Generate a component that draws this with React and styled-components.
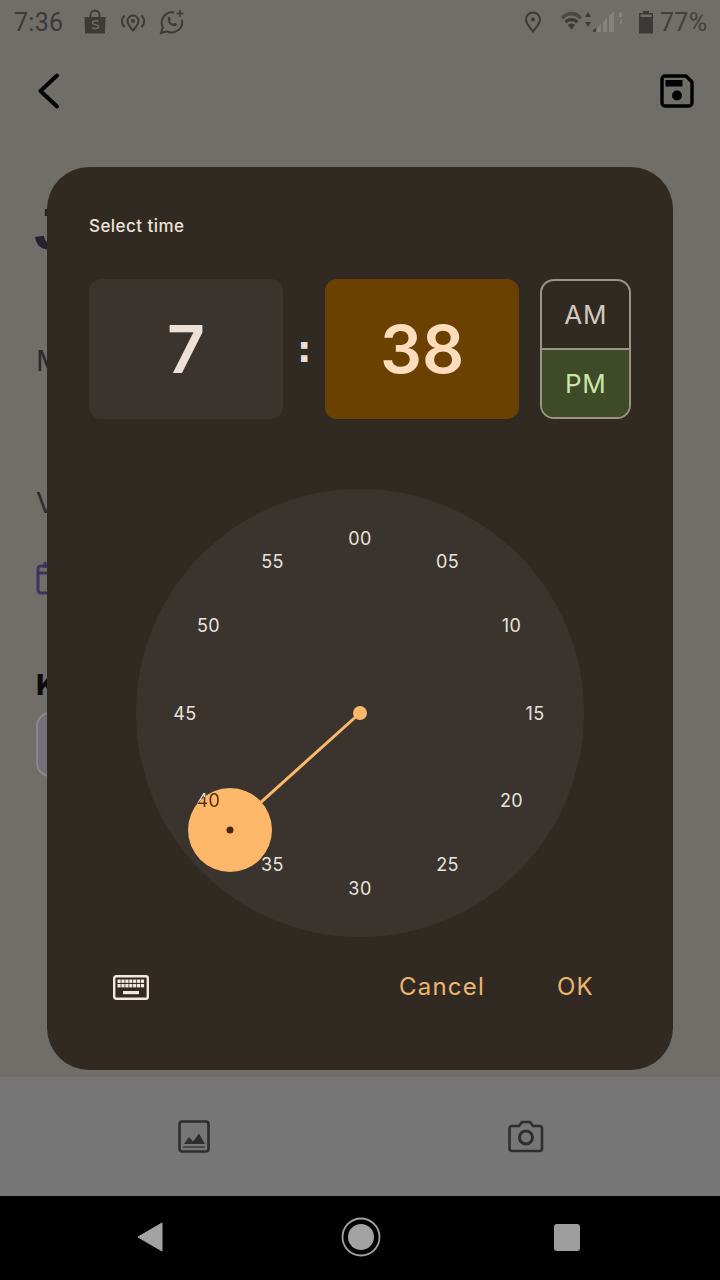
import React from "react";
import styled, { createGlobalStyle } from "styled-components";

const Global = createGlobalStyle`
  html, body { margin: 0; padding: 0; background: #000; }
  * { box-sizing: border-box; }
`;

const Page = styled.div`
  position: relative;
  width: 720px;
  height: 1280px;
  overflow: hidden;
  display: flex;
  flex-direction: column;
  background: #6f6e69;
  font-family: Inter, "Liberation Sans", sans-serif;
`;

const StatusBar = styled.div`
  height: 44px;
  padding: 0 14px;
  display: flex;
  align-items: center;
  justify-content: space-between;
  color: #3b3a37;
  font-family: Roboto, "Liberation Sans", sans-serif;
  font-size: 25px;
  letter-spacing: 0.3px;
`;

const StatusGroup = styled.div`
  display: flex;
  align-items: center;
  gap: ${(p) => p.$gap || 0}px;
`;

const Time = styled.span`
  width: 56px;
`;

const Spacer = styled.span`
  width: ${(p) => p.$w}px;
`;

const Percent = styled.span`
  margin-left: 6px;
  width: 46px;
  color: #41403d;
`;

const AppBar = styled.div`
  height: 94px;
  padding: 0 26px 0 38px;
  display: flex;
  align-items: center;
  justify-content: space-between;
`;

const Content = styled.div`
  flex: 1;
  padding: 60px 0 0 36px;
  display: flex;
  flex-direction: column;
  align-items: flex-start;
`;

const Title = styled.div`
  font-family: "Liberation Mono", monospace;
  font-size: 62px;
  line-height: 70px;
  margin-left: -4px;
  color: #23222c;
  font-weight: 700;
`;

const FieldLabel = styled.div`
  font-size: 29px;
  line-height: 36px;
  color: ${(p) => (p.$bold ? "#0a0a0a" : "#2b2b2e")};
  font-weight: ${(p) => (p.$bold ? 800 : 400)};
  margin-top: ${(p) => p.$top}px;
`;

const CalendarIcon = styled.svg`
  margin-top: 40px;
  display: block;
`;

const InputBox = styled.div`
  margin-top: 9px;
  width: 100px;
  height: 65px;
  border: 2px solid #8a888c;
  border-radius: 14px;
  background: #747279;
`;

const BottomBar = styled.div`
  height: 119px;
  background: #767676;
  display: flex;
  align-items: center;
  padding: 0 176px 0 178px;
  justify-content: space-between;
`;

const NavBar = styled.div`
  height: 84px;
  background: #000;
  display: flex;
  align-items: center;
  justify-content: space-between;
  padding: 0 140px 2px 137px;
`;

const Scrim = styled.div`
  position: absolute;
  inset: 0;
  display: flex;
  justify-content: center;
  padding-top: 167px;
`;

const Dialog = styled.div`
  width: 626px;
  height: 903px;
  border-radius: 42px;
  background: #312a23;
  padding: 48px 42px 0;
  display: flex;
  flex-direction: column;
`;

const Heading = styled.div`
  font-size: 17px;
  line-height: 22px;
  letter-spacing: 0.45px;
  color: #ede1d8;
  font-weight: 500;
`;

const TimeRow = styled.div`
  margin-top: 42px;
  height: 140px;
  display: flex;
  align-items: stretch;
`;

const TimeBox = styled.div`
  width: 195px;
  border-radius: 12px;
  display: flex;
  align-items: center;
  justify-content: center;
  font-size: 66px;
  font-weight: 600;
  background: ${(p) => (p.$active ? "#6a4100" : "#3b332d")};
  color: ${(p) => (p.$active ? "#ffdcbb" : "#ece0d8")};
`;

const Colon = styled.div`
  width: 42px;
  display: flex;
  align-items: center;
  justify-content: center;
  font-family: "DejaVu Sans", sans-serif;
  font-size: 36px;
  font-weight: 700;
  color: #ece0d8;
`;

const Period = styled.div`
  margin-left: 21px;
  width: 91px;
  border: 2px solid #9a9388;
  border-radius: 14px;
  overflow: hidden;
  display: flex;
  flex-direction: column;
`;

const PeriodOption = styled.div`
  flex: 1;
  display: flex;
  align-items: center;
  justify-content: center;
  font-size: 26px;
  letter-spacing: 0.6px;
  font-weight: 400;
  background: ${(p) => (p.$on ? "#3f4a29" : "transparent")};
  color: ${(p) => (p.$on ? "#c8e6a6" : "#d3c8bd")};
  border-top: ${(p) => (p.$on ? "2px solid #9a9388" : "none")};
`;

const Dial = styled.div`
  position: relative;
  margin: 70px auto 0;
  width: 448px;
  height: 448px;
  flex: none;
  border-radius: 50%;
  background: #3b332d;
`;

const Hand = styled.svg`
  position: absolute;
  inset: 0;
`;

const Tick = styled.span`
  position: absolute;
  width: 44px;
  height: 24px;
  margin: -12px 0 0 -22px;
  display: flex;
  align-items: center;
  justify-content: center;
  font-size: 18px;
  letter-spacing: 0.4px;
  color: #e9e2dc;
`;

const SelectedTick = styled(Tick)`
  color: transparent;
  background: radial-gradient(circle 42px at 44px 41px, #553000 99%, #e9e2dc 100%);
  background-clip: text;
  -webkit-background-clip: text;
`;

const Actions = styled.div`
  margin-top: 32px;
  display: flex;
  align-items: center;
  padding: 0 37px 0 24px;
`;

const ActionButton = styled.div`
  font-size: 24px;
  line-height: 36px;
  letter-spacing: 1.2px;
  color: #ecb571;
  margin-left: ${(p) => p.$left}px;
`;

const MINUTES = ["00", "05", "10", "15", "20", "25", "30", "35", "40", "45", "50", "55"];
const ICON = "#3b3a37";

function Ticks() {
  return MINUTES.map((m, i) => {
    const a = (i * 30 * Math.PI) / 180;
    const left = 224 + 175 * Math.sin(a);
    const top = 224 - 175 * Math.cos(a);
    const Comp = m === "40" ? SelectedTick : Tick;
    return (
      <Comp key={m} style={{ left, top }}>
        {m}
      </Comp>
    );
  });
}

const ShopIcon = () => (
  <svg width="24" height="26" viewBox="0 0 24 26">
    <path d="M1.500 8h21l-.6 16.500H2.100z" fill={ICON} />
    <path d="M7.500 9V6a4.500 4.500 0 0 1 9 0v3" fill="none" stroke={ICON} strokeWidth="1.800" />
    <path d="M15.500 12.500c-1-1-6-1.200-6 1.200 0 2.600 6.200 1.300 6.200 4.100 0 2.200-4.700 2.200-6.500.8" fill="none" stroke="#6f6e69" strokeWidth="1.400" />
  </svg>
);

const NearbyIcon = () => (
  <svg width="26" height="24" viewBox="0 0 26 24" fill="none" stroke={ICON} strokeWidth="2">
    <path d="M13 20.500c-3.400-3.800-5.500-6.300-5.500-9.500a5.500 5.500 0 0 1 11 0c0 3.200-2.100 5.700-5.500 9.500z" />
    <circle cx="13" cy="11" r="2" fill={ICON} stroke="none" />
    <path d="M4.500 5.500c-3.500 3.500-3.500 8 0 11.500M21.500 5.500c3.500 3.500 3.500 8 0 11.500" />
  </svg>
);

const WhatsIcon = () => (
  <svg width="26" height="26" viewBox="0 0 26 26" fill="none" stroke={ICON} strokeWidth="2">
    <path d="M15 3.500A10.500 10.500 0 0 0 3.800 18.500L2 24l6-1.700A10.500 10.500 0 0 0 23 11" />
    <path d="M8.500 9c.5-1.500 2-1.500 2.500-.5l.8 1.800-1 1.400c.8 1.500 2 2.600 3.500 3.300l1.400-1.200 2 1c.6 1-.5 2.500-2 2.500-3.800 0-7.900-4-6.700-8.300z" fill={ICON} stroke="none" />
    <path d="M21 1v7M17.500 4.500h7" strokeWidth="1.600" />
  </svg>
);

const PinIcon = () => (
  <svg width="18" height="22" viewBox="0 0 18 22" fill="none" stroke={ICON} strokeWidth="2">
    <path d="M9 20.500C5 15.500 2 12.500 2 8.500a7 7 0 0 1 14 0c0 4-3 7-7 12z" />
    <circle cx="9" cy="8.500" r="2" fill={ICON} stroke="none" />
  </svg>
);

const WifiIcon = () => (
  <svg width="32" height="22" viewBox="0 0 32 22">
    <path d="M0 6C6-1 16-1 21 6l-2 2.500C13 3 7 3 2 8.500z" fill="#4a4946" />
    <path d="M3.500 10C7 6 14 6 17.500 10l-2 2.200c-2.500-2.700-7.500-2.700-10 0z" fill={ICON} />
    <path d="M7 14c2-2 5-2 7 0l-3.500 4.500z" fill={ICON} />
    <path d="M27 1l3 5h-6zM27 16l-3-5h6z" fill={ICON} />
  </svg>
);

const SignalIcon = () => (
  <svg width="34" height="24" viewBox="0 0 34 24" fill="#82817c">
    <path d="M0 22l3-3v3zM4 18l4-4v8H4zM10 12l4-4v14h-4zM16 6l5-5v21h-5z" />
    <path d="M26 3l3-1v5h-3zM27 11l2-3v5l-2 1z" fill="#85847f" />
    <path d="M0 20l3-2v4H0z" fill="#3f3e3b" />
  </svg>
);

const BatteryIcon = () => (
  <svg width="16" height="24" viewBox="0 0 16 24">
    <path d="M5 1h6v2h4v20.500H1V3h4z" fill={ICON} />
    <rect x="2.500" y="4.500" width="11" height="2.500" fill="#6f6e69" />
  </svg>
);

const BackIcon = () => (
  <svg width="22" height="36" viewBox="0 0 22 36" fill="none" stroke="#000" strokeWidth="4" strokeLinecap="round" strokeLinejoin="round">
    <path d="M19 2.500L2.500 18 19 33.500" />
  </svg>
);

const SaveIcon = () => (
  <svg width="34" height="34" viewBox="0 0 34 34">
    <path d="M5 2h21l6 6v21a3 3 0 0 1-3 3H5a3 3 0 0 1-3-3V5a3 3 0 0 1 3-3z" fill="none" stroke="#000" strokeWidth="3.400" strokeLinejoin="round" />
    <rect x="5.500" y="6" width="17" height="6.500" fill="#000" />
    <circle cx="17" cy="21.500" r="5" fill="#000" />
  </svg>
);

const ImageIcon = () => (
  <svg width="32" height="33" viewBox="0 0 32 33" fill="none">
    <rect x="1.500" y="1.500" width="29" height="30" rx="2.500" stroke="#2e2e2e" strokeWidth="2.600" />
    <path d="M6 24l5-7 4 4.500 6-8 6 10.500z" fill="#2e2e2e" />
    <path d="M5 27h22" stroke="#2e2e2e" strokeWidth="1.200" />
  </svg>
);

const CameraIcon = () => (
  <svg width="36" height="33" viewBox="0 0 36 33" fill="none" stroke="#2e2e2e" strokeWidth="2.600" strokeLinejoin="round">
    <path d="M4 6h7l3-4h8l3 4h7a2.500 2.500 0 0 1 2 2.500v20a2.500 2.500 0 0 1-2 2.500H4a2.500 2.500 0 0 1-2.500-2.500v-20A2.500 2.500 0 0 1 4 6z" />
    <circle cx="18" cy="17.500" r="6.500" strokeWidth="3" />
  </svg>
);

const KeyboardIcon = () => {
  const keys = [];
  for (let r = 0; r < 2; r++) {
    for (let c = 0; c < 7; c++) {
      keys.push(<rect key={`${r}-${c}`} x={4.500 + c * 3.900} y={4.500 + r * 4.500} width="3.200" height="3.400" />);
    }
  }
  return (
    <svg width="36" height="25" viewBox="0 0 36 25" fill="#f3e8de">
      <rect x="1.200" y="1.200" width="33.600" height="22.600" rx="2" fill="none" stroke="#f3e8de" strokeWidth="2.400" />
      {keys}
      <rect x="10" y="16" width="16" height="3.200" />
    </svg>
  );
};

const NavBack = () => (
  <svg width="30" height="30" viewBox="0 0 30 30">
    <path d="M25 1v28L1 15z" fill="#a3a3a3" stroke="#a3a3a3" strokeLinejoin="round" />
  </svg>
);

const NavHome = () => (
  <svg width="40" height="40" viewBox="0 0 40 40">
    <circle cx="20" cy="20" r="18.500" fill="none" stroke="#a3a3a3" strokeWidth="1.800" />
    <circle cx="20" cy="20" r="13" fill="#a3a3a3" />
  </svg>
);

const NavSquare = () => (
  <svg width="26" height="27" viewBox="0 0 26 27">
    <rect width="26" height="27" rx="3" fill="#9d9d9d" />
  </svg>
);

export default function App() {
  return (
    <Page>
      <Global />
      <StatusBar>
        <StatusGroup $gap={13}>
          <Time>7:36</Time>
          <ShopIcon />
          <NearbyIcon />
          <WhatsIcon />
        </StatusGroup>
        <StatusGroup>
          <PinIcon />
          <Spacer $w={19} />
          <WifiIcon />
          <SignalIcon />
          <Spacer $w={11} />
          <BatteryIcon />
          <Percent>77%</Percent>
        </StatusGroup>
      </StatusBar>
      <AppBar>
        <BackIcon />
        <SaveIcon />
      </AppBar>
      <Content>
        <Title>J</Title>
        <FieldLabel $top={75}>M</FieldLabel>
        <FieldLabel $top={106}>V</FieldLabel>
        <CalendarIcon width="30" height="34" viewBox="0 0 30 34" fill="none" stroke="#3a3560" strokeWidth="3">
          <rect x="2" y="5" width="26" height="27" rx="3" />
          <path d="M2 12h26M9 1v6" />
        </CalendarIcon>
        <FieldLabel $bold $top={72}>K</FieldLabel>
        <InputBox />
      </Content>
      <BottomBar>
        <ImageIcon />
        <CameraIcon />
      </BottomBar>
      <NavBar>
        <NavBack />
        <NavHome />
        <NavSquare />
      </NavBar>
      <Scrim>
        <Dialog>
          <Heading>Select time</Heading>
          <TimeRow>
            <TimeBox>7</TimeBox>
            <Colon>:</Colon>
            <TimeBox $active>38</TimeBox>
            <Period>
              <PeriodOption>AM</PeriodOption>
              <PeriodOption $on>PM</PeriodOption>
            </Period>
          </TimeRow>
          <Dial>
            <Hand width="448" height="448" viewBox="0 0 448 448">
              <line x1="224" y1="224" x2="94" y2="341" stroke="#ffb869" strokeWidth="3" />
              <circle cx="224" cy="224" r="7" fill="#ffb869" />
              <circle cx="94" cy="341" r="42" fill="#ffb869" />
              <circle cx="94" cy="341" r="3.500" fill="#4a2800" />
            </Hand>
            <Ticks />
          </Dial>
          <Actions>
            <KeyboardIcon />
            <ActionButton $left={250}>Cancel</ActionButton>
            <ActionButton $left={72}>OK</ActionButton>
          </Actions>
        </Dialog>
      </Scrim>
    </Page>
  );
}
